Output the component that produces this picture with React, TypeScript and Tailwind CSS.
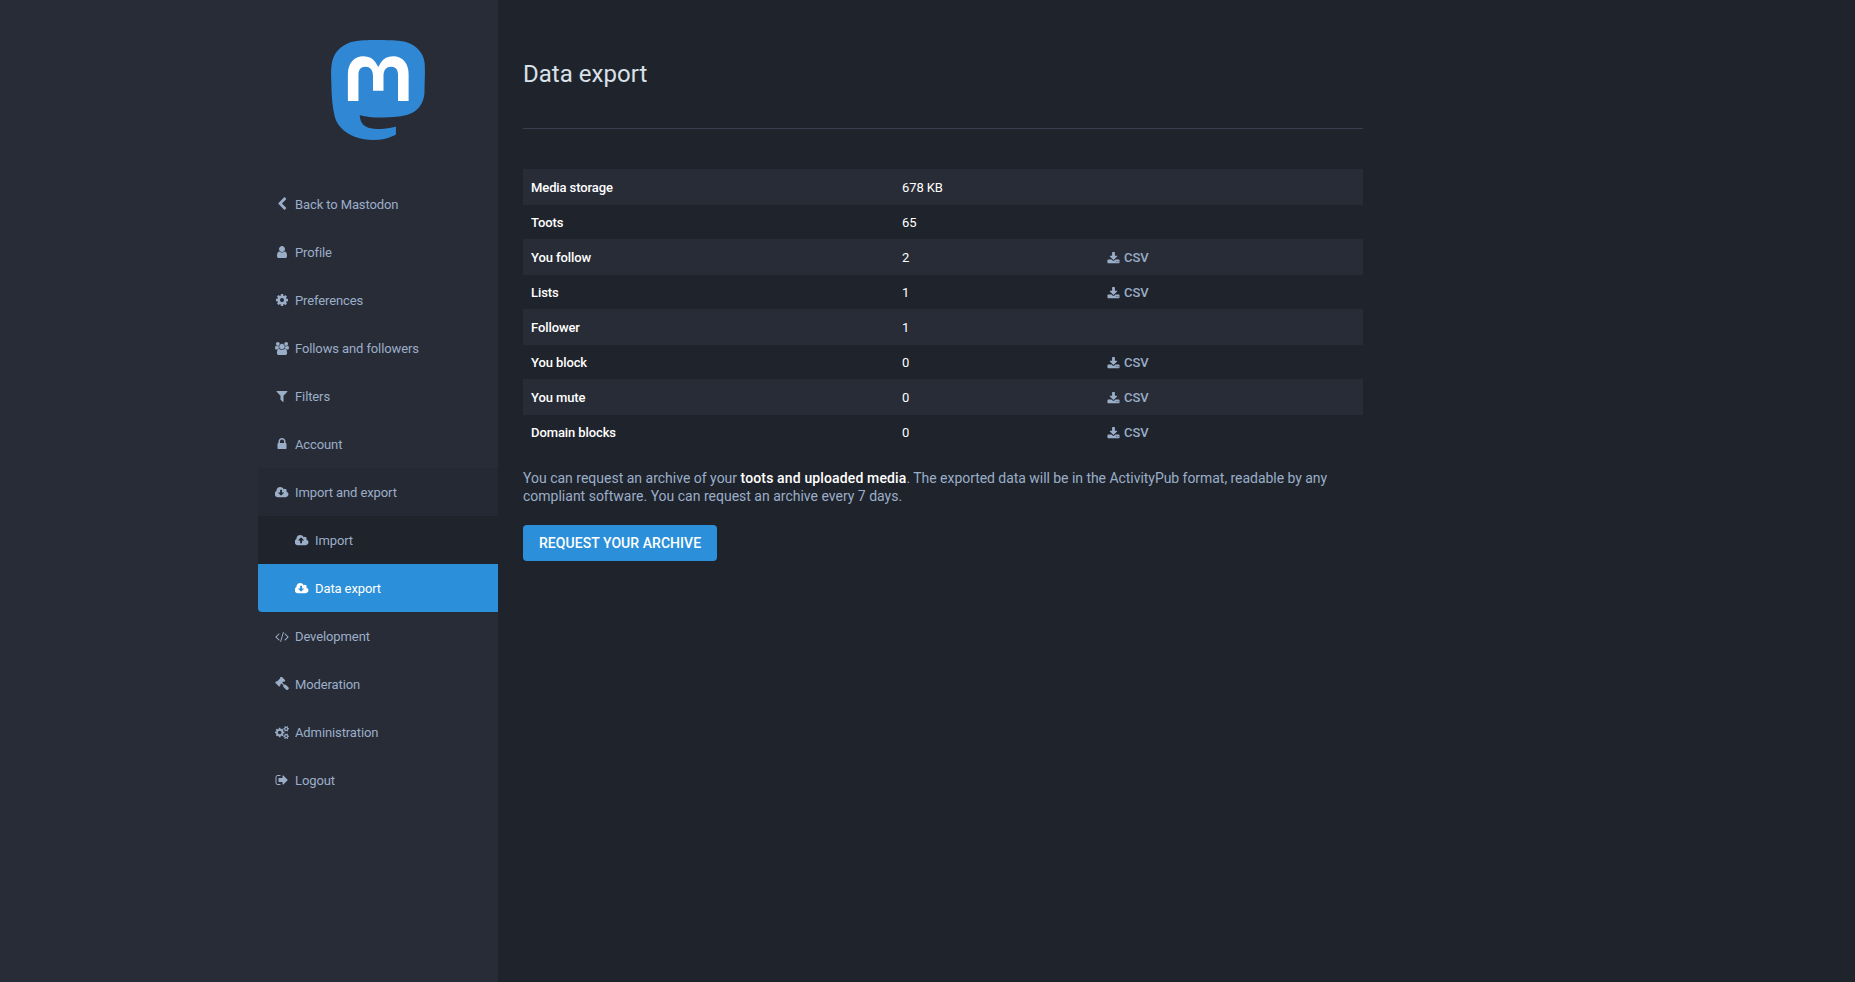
import React from "react";

const P: Record<string, string> = {
  back: "M1427 301l-531 531 531 531q19 19 19 45t-19 45l-166 166q-19 19-45 19t-45-19l-742-742q-19-19-19-45t19-45l742-742q19-19 45-19t45 19l166 166q19 19 19 45t-19 45z",
  user: "M1536 1399q0 109-62.5 187t-150.5 78h-854q-88 0-150.5-78t-62.5-187q0-85 8.5-160.5t31.5-152 58.5-131 94-89 134.5-34.5q131 128 313 128t313-128q76 0 134.5 34.5t94 89 58.5 131 31.5 152 8.5 160.5zm-256-887q0 159-112.5 271.5t-271.5 112.5-271.5-112.5-112.5-271.5 112.5-271.5 271.5-112.5 271.5 112.5 112.5 271.5z",
  cog: "M1152 896q0-106-75-181t-181-75-181 75-75 181 75 181 181 75 181-75 75-181zm512-109v222q0 12-8 23t-20 13l-185 28q-19 54-39 91 35 50 107 138 10 12 10 25t-9 23q-27 37-99 108t-94 71q-12 0-26-9l-138-108q-44 23-91 38-16 136-29 186-7 28-36 28h-222q-14 0-24.5-8.5t-11.5-21.5l-28-184q-49-16-90-37l-141 107q-10 9-25 9-14 0-25-11-126-114-165-168-7-10-7-23 0-12 8-23 15-21 51-66.5t54-70.5q-27-50-41-99l-183-27q-13-2-21-12.5t-8-23.5v-222q0-12 8-23t19-13l186-28q14-46 39-92-40-57-107-138-10-12-10-24 0-10 9-23 26-36 98.5-107.5t94.5-71.5q13 0 26 10l138 107q44-23 91-38 16-136 29-186 7-28 36-28h222q14 0 24.5 8.5t11.5 21.5l28 184q49 16 90 37l142-107q9-9 24-9 13 0 25 10 129 119 165 170 7 8 7 22 0 12-8 23-15 21-51 66.5t-54 70.5q26 50 41 98l183 28q13 2 21 12.5t8 23.5z",
  users: "M593 896q-162 5-265 128h-134q-82 0-138-40.5t-56-118.5q0-353 124-353 6 0 43.5 21t97.5 42.5 119 21.5q67 0 133-23-5 37-5 66 0 139 81 256zm1071 637q0 120-73 189.5t-194 69.5h-874q-121 0-194-69.5t-73-189.5q0-53 3.5-103.5t14-109 26.5-108.5 43-97.5 62-81 85.5-53.5 111.5-20q10 0 43 21.5t73 48 107 48 135 21.5 135-21.5 107-48 73-48 43-21.5q61 0 111.5 20t85.5 53.5 62 81 43 97.5 26.5 108.5 14 109 3.5 103.5zm-1024-1277q0 106-75 181t-181 75-181-75-75-181 75-181 181-75 181 75 75 181zm704 384q0 159-112.5 271.5t-271.5 112.5-271.5-112.5-112.5-271.5 112.5-271.5 271.5-112.5 271.5 112.5 112.5 271.5zm576 225q0 78-56 118.5t-138 40.5h-134q-103-123-265-128 81-117 81-256 0-29-5-66 66 23 133 23 59 0 119-21.5t97.5-42.5 43.5-21q124 0 124 353zm-128-609q0 106-75 181t-181 75-181-75-75-181 75-181 181-75 181 75 75 181z",
  filter: "M1595 295q17 41-14 70l-493 493v742q0 42-39 59-13 5-25 5-27 0-45-19l-256-256q-19-19-19-45v-486l-493-493q-31-29-14-70 17-39 59-39h1280q42 0 59 39z",
  lock: "M640 768h512v-192q0-106-75-181t-181-75-181 75-75 181v192zm832 96v576q0 40-28 68t-68 28h-960q-40 0-68-28t-28-68v-576q0-40 28-68t68-28h32v-192q0-184 132-316t316-132 316 132 132 316v192h32q40 0 68 28t28 68z",
  cloudDown: "M1216 928q0-14-9-23t-23-9h-224v-352q0-13-9.5-22.5t-22.5-9.5h-192q-13 0-22.5 9.5t-9.5 22.5v352h-224q-14 0-23 9t-9 23q0 12 10 24l352 352q9 9 23 9t23-9l351-351q11-13 11-25zm640 224q0 159-112.5 271.5t-271.5 112.5h-1088q-185 0-316.5-131.5t-131.5-316.5q0-130 70-240t188-165q-2-30-2-43 0-212 150-362t362-150q156 0 285.5 87t188.5 231q71-62 166-62 106 0 181 75t75 181q0 76-41 138 130 31 213.5 135.5t83.5 238.5z",
  cloudUp: "M1216 864q0-14-9-23l-352-352q-9-9-23-9t-23 9l-351 351q-11 13-11 25 0 14 9 23t23 9h224v352q0 13 9.5 22.5t22.5 9.5h192q13 0 22.5-9.5t9.5-22.5v-352h224q13 0 22.5-9.5t9.5-22.5zm640 288q0 159-112.5 271.5t-271.5 112.5h-1088q-185 0-316.5-131.5t-131.5-316.5q0-130 70-240t188-165q-2-30-2-43 0-212 150-362t362-150q156 0 285.5 87t188.5 231q71-62 166-62 106 0 181 75t75 181q0 76-41 138 130 31 213.5 135.5t83.5 238.5z",
  code: "M617 1399l-50 50q-10 10-23 10t-23-10l-466-466q-10-10-10-23t10-23l466-466q10-10 23-10t23 10l50 50q10 10 10 23t-10 23l-393 393 393 393q10 10 10 23t-10 23zm591-1067l-373 1291q-4 13-15.5 19.5t-23.5 2.5l-62-17q-13-4-19.5-15.5t-2.5-24.5l373-1291q4-13 15.5-19.5t23.5-2.5l62 17q13 4 19.5 15.5t2.5 24.5zm657 651l-466 466q-10 10-23 10t-23-10l-50-50q-10-10-10-23t10-23l393-393-393-393q-10-10-10-23t10-23l50-50q10-10 23-10t23 10l466 466q10 10 10 23t-10 23z",
  gavel: "M1771 1440q0 53-37 90l-107 108q-39 37-91 37-53 0-90-37l-363-364q-38-36-38-90 0-53 43-96l-256-256-126 126q-14 14-34 14t-34-14q2 2 12.5 12t12.5 13 10 11.5 10 13.5 6 13.5 5.5 16.5 1.5 18q0 38-28 68-3 3-16.5 18t-19 20.5-18.5 16.5-22 15.5-22 9-26 4.5q-40 0-68-28l-408-408q-28-28-28-68 0-13 4.5-26t9-22 15.5-22 16.5-18.5 20.5-19 18-16.5q30-28 68-28 10 0 18 1.5t16.5 5.5 13.5 6 13.5 10 11.5 10 13 12.5 12 12.5q-14-14-14-34t14-34l348-348q14-14 34-14t34 14q-2-2-12.5-12t-12.5-13-10-11.5-10-13.5-6-13.5-5.5-16.5-1.5-18q0-38 28-68 3-3 16.5-18t19-20.5 18.5-16.5 22-15.5 22-9 26-4.5q40 0 68 28l408 408q28 28 28 68 0 13-4.5 26t-9 22-15.5 22-16.5 18.5-20.5 19-18 16.5q-30 28-68 28-10 0-18-1.5t-16.5-5.5-13.5-6-13.5-10-11.5-10-13-12.5-12-12.5q14 14 14 34t-14 34l-126 126 256 256q43-43 96-43 52 0 91 37l363 363q37 39 37 91z",
  cogs: "M896 896q0-106-75-181t-181-75-181 75-75 181 75 181 181 75 181-75 75-181zm768 512q0-52-38-90t-90-38-90 38-38 90q0 53 37.5 90.5t90.5 37.5 90.5-37.5 37.5-90.5zm0-1024q0-52-38-90t-90-38-90 38-38 90q0 53 37.5 90.5t90.5 37.5 90.5-37.5 37.5-90.5zm-384 421v185q0 10-7 19.5t-16 10.5l-155 24q-11 35-32 76 34 48 90 115 7 11 7 20 0 12-7 19-23 30-82.5 89.5t-78.5 59.5q-11 0-21-7l-115-90q-37 19-77 31-11 108-23 155-7 24-30 24h-186q-11 0-20-7.5t-10-17.5l-23-153q-34-10-75-31l-118 89q-7 7-20 7-11 0-21-8-144-133-144-160 0-9 7-19 10-14 41-53t47-61q-23-44-35-82l-152-24q-10-1-17-9.5t-7-19.5v-185q0-10 7-19.5t16-10.5l155-24q11-35 32-76-34-48-90-115-7-11-7-20 0-12 7-20 22-30 82-89t79-59q11 0 21 7l115 90q34-18 77-32 11-108 23-154 7-24 30-24h186q11 0 20 7.5t10 17.5l23 153q34 10 75 31l118-89q8-7 20-7 11 0 21 8 144 133 144 160 0 8-7 19-12 16-42 54t-45 60q23 48 34 82l152 23q10 2 17 10.5t7 19.5zm640 533v140q0 16-149 31-12 27-30 52 51 113 51 138 0 4-4 7-122 71-124 71-8 0-46-47t-52-68q-20 2-30 2t-30-2q-14 21-52 68t-46 47q-2 0-124-71-4-3-4-7 0-25 51-138-18-25-30-52-149-15-149-31v-140q0-16 149-31 13-29 30-52-51-113-51-138 0-4 4-7 4-2 35-20t59-34 30-16q8 0 46 46.5t52 67.5q20-2 30-2t30 2q51-71 92-112l6-2q4 0 124 70 4 3 4 7 0 25-51 138 17 23 30 52 149 15 149 31zm0-1024v140q0 16-149 31-12 27-30 52 51 113 51 138 0 4-4 7-122 71-124 71-8 0-46-47t-52-68q-20 2-30 2t-30-2q-14 21-52 68t-46 47q-2 0-124-71-4-3-4-7 0-25 51-138-18-25-30-52-149-15-149-31v-140q0-16 149-31 13-29 30-52-51-113-51-138 0-4 4-7 4-2 35-20t59-34 30-16q8 0 46 46.5t52 67.5q20-2 30-2t30 2q51-71 92-112l6-2q4 0 124 70 4 3 4 7 0 25-51 138 17 23 30 52 149 15 149 31z",
  signOut: "M704 1440q0 4 1 20t.5 26.5-3 23.5-10 19.5-20.5 6.5h-320q-119 0-203.5-84.5t-84.5-203.5v-704q0-119 84.5-203.5t203.5-84.5h320q13 0 22.5 9.5t9.5 22.5q0 4 1 20t.5 26.5-3 23.5-10 19.5-20.5 6.5h-320q-66 0-113 47t-47 113v704q0 66 47 113t113 47h312l11.5 1 11.5 3 8 5.5 7 9 2 13.5zm928-544q0 26-19 45l-544 544q-19 19-45 19t-45-19-19-45v-288h-448q-26 0-45-19t-19-45v-384q0-26 19-45t45-19h448v-288q0-26 19-45t45-19 45 19l544 544q19 19 19 45z",
  download: "M1344 1344q0-26-19-45t-45-19-45 19-19 45 19 45 45 19 45-19 19-45zm256 0q0-26-19-45t-45-19-45 19-19 45 19 45 45 19 45-19 19-45zm128-224v320q0 40-28 68t-68 28h-1472q-40 0-68-28t-28-68v-320q0-40 28-68t68-28h465l135 136q58 56 136 56t136-56l136-136h464q40 0 68 28t28 68zm-325-569q17 41-14 70l-448 448q-18 19-45 19t-45-19l-448-448q-31-29-14-70 17-39 59-39h256v-448q0-26 19-45t45-19h256q26 0 45 19t19 45v448h256q42 0 59 39z",
};

const WIDE = ["users", "cloudDown", "cloudUp", "code", "cogs"];

function Icon({ name }: { name: string }) {
  const wide = WIDE.includes(name);
  const small = name === "download";
  return (
    <svg
      viewBox={wide ? "0 0 1920 1792" : "0 0 1792 1792"}
      className={
        wide
          ? "h-[13px] w-[14px] shrink-0 fill-current"
          : small
            ? "h-[13px] w-[13px] shrink-0 fill-current"
            : "h-[14px] w-[14px] shrink-0 fill-current"
      }
    >
      <path d={P[name]} />
    </svg>
  );
}

function NavItem({ icon, label, sub, selected, active }: { icon: string; label: string; sub?: boolean; selected?: boolean; active?: boolean }) {
  const base = "flex h-12 items-center pt-[2px] text-[13px] tracking-[-0.11px] ";
  const indent = sub ? "pl-[35px] " : "pl-[15px] ";
  const tone = active
    ? "bg-[#2b90d9] text-white rounded-bl-[4px]"
    : selected
      ? "bg-[#252933] text-[#9baec8]"
      : sub
        ? "bg-[#1f232b] text-[#9baec8]"
        : "text-[#9baec8]";
  return (
    <li>
      <a className={base + indent + tone}>
        <span className="mr-[5px] flex w-[17px] -translate-y-px justify-center">
          <Icon name={icon} />
        </span>
        {label}
      </a>
    </li>
  );
}

const rows = [
  ["Media storage", "678 KB", false],
  ["Toots", "65", false],
  ["You follow", "2", true],
  ["Lists", "1", true],
  ["Follower", "1", false],
  ["You block", "0", true],
  ["You mute", "0", true],
  ["Domain blocks", "0", true],
] as const;

export default function App() {
  return (
    <div className="flex min-h-[982px] bg-[#1f232b] font-['Roboto',sans-serif] text-[#9baec8]">
      <aside className="flex w-[498px] shrink-0 justify-end bg-[#282c37]">
        <div className="w-[240px]">
          <div className="flex h-[180px] justify-center pt-[40px]">
            <svg viewBox="0 0 61 65" className="h-[100px] w-[94px]">
              <path
                fill="#3088d4"
                d="M60.7539 14.3904C59.8143 7.40642 53.7273 1.90257 46.5117 0.836066C45.2943 0.655854 40.6819 0 29.9973 0H29.9175C19.2299 0 16.937 0.655854 15.7196 0.836066C8.70488 1.87302 2.29885 6.81852 0.744617 13.8852C-0.00294988 17.3654 -0.0827298 21.2237 0.0561464 24.7629C0.254119 29.8384 0.292531 34.905 0.753482 39.9598C1.07215 43.3175 1.62806 46.6484 2.41704 49.9276C3.89445 55.9839 9.87499 61.0239 15.7344 63.0801C22.0077 65.2244 28.7542 65.5804 35.2184 64.1082C35.9295 63.9428 36.6318 63.7508 37.3252 63.5321C38.8971 63.0329 40.738 62.4745 42.0913 61.4937C42.1099 61.4799 42.1251 61.4621 42.1358 61.4417C42.1466 61.4212 42.1526 61.3986 42.1534 61.3755V56.4773C42.153 56.4557 42.1479 56.4345 42.1383 56.4151C42.1287 56.3958 42.1149 56.3788 42.0979 56.3655C42.0809 56.3522 42.0611 56.3429 42.04 56.3382C42.019 56.3335 41.9971 56.3336 41.9761 56.3384C37.8345 57.3276 33.5905 57.8234 29.3324 57.8156C22.0045 57.8156 20.0336 54.3384 19.4693 52.8908C19.0156 51.6397 18.7275 50.3346 18.6124 49.0088C18.6112 48.9866 18.6153 48.9643 18.6243 48.9439C18.6333 48.9236 18.647 48.9056 18.6643 48.8915C18.6816 48.8774 18.7019 48.8675 18.7237 48.8628C18.7455 48.858 18.7681 48.8585 18.7897 48.8641C22.8622 49.8465 27.037 50.3423 31.2265 50.3412C32.234 50.3412 33.2387 50.3412 34.2463 50.3146C38.4598 50.1964 42.9009 49.9808 47.0465 49.1713C47.1499 49.1506 47.2534 49.1329 47.342 49.1063C53.881 47.8507 60.1038 43.9097 60.7362 33.9301C60.7598 33.5372 60.8189 29.8148 60.8189 29.4071C60.8218 28.0215 61.2651 19.5781 60.7539 14.3904Z"
              />
              <path
                fill="#ffffff"
                d="M50.3943 22.237V39.5876H43.5185V22.7481C43.5185 19.2029 42.0411 17.3949 39.036 17.3949C35.7325 17.3949 34.0778 19.5338 34.0778 23.7585V32.9759H27.2434V23.7585C27.2434 19.5338 25.5857 17.3949 22.2822 17.3949C19.2949 17.3949 17.8027 19.2029 17.8027 22.7481V39.5876H10.9298V22.237C10.9298 18.6918 11.835 15.8754 13.6453 13.7877C15.5128 11.7049 17.9623 10.6355 21.0028 10.6355C24.522 10.6355 27.1813 11.9885 28.9542 14.6917L30.665 17.5633L32.3788 14.6917C34.1517 11.9885 36.811 10.6355 40.3272 10.6355C43.3648 10.6355 45.8143 11.7049 47.6847 13.7877C49.4969 15.8734 50.4021 18.6899 50.3943 22.237Z"
              />
            </svg>
          </div>
          <ul>
            <NavItem icon="back" label="Back to Mastodon" />
            <NavItem icon="user" label="Profile" />
            <NavItem icon="cog" label="Preferences" />
            <NavItem icon="users" label="Follows and followers" />
            <NavItem icon="filter" label="Filters" />
            <NavItem icon="lock" label="Account" />
            <NavItem icon="cloudDown" label="Import and export" selected />
            <NavItem icon="cloudUp" label="Import" sub />
            <NavItem icon="cloudDown" label="Data export" sub active />
            <NavItem icon="code" label="Development" />
            <NavItem icon="gavel" label="Moderation" />
            <NavItem icon="cogs" label="Administration" />
            <NavItem icon="signOut" label="Logout" />
          </ul>
        </div>
      </aside>
      <main className="ml-[25px] w-[840px] pt-[56px]">
        <h2 className="text-2xl leading-9 font-normal tracking-[0.03px] text-[#d9e1e8]">Data export</h2>
        <hr className="mt-[36px] mb-[40px] border-0 border-b border-[#393f4f]" />
        <table className="w-full table-fixed border-collapse text-[13px] leading-[18px]">
          <colgroup>
            <col className="w-[371px]" />
            <col className="w-[205px]" />
            <col className="w-[264px]" />
          </colgroup>
          <tbody>
            {rows.map(([name, value, csv]) => (
              <tr key={name} className="border-t border-[#282c37] odd:bg-[#282c37]">
                <th className="px-2 pt-[9px] pb-[7px] text-left font-medium tracking-[-0.1px] text-white">{name}</th>
                <td className="px-2 pt-[9px] pb-[7px] tracking-[-0.1px] text-white">{value}</td>
                <td className="px-2 pt-[9px] pb-[7px]">
                  {csv && (
                    <a className="flex items-center gap-1 font-medium text-[#9baec8]">
                      <Icon name="download" />
                      CSV
                    </a>
                  )}
                </td>
              </tr>
            ))}
          </tbody>
        </table>
        <p className="mt-5 text-sm leading-[18px]">
          You can request an archive of your <strong className="font-medium tracking-[0.14px] text-white">toots and uploaded media</strong>
          <span className="tracking-[-0.045px]">. The exported data will be in the ActivityPub format, readable by any</span> compliant software. You can request an archive every 7 days.
        </p>
        <button className="mt-5 h-9 rounded bg-[#2b90d9] px-4 text-sm font-medium tracking-[0.05px] text-white uppercase">
          Request your archive
        </button>
      </main>
    </div>
  );
}
